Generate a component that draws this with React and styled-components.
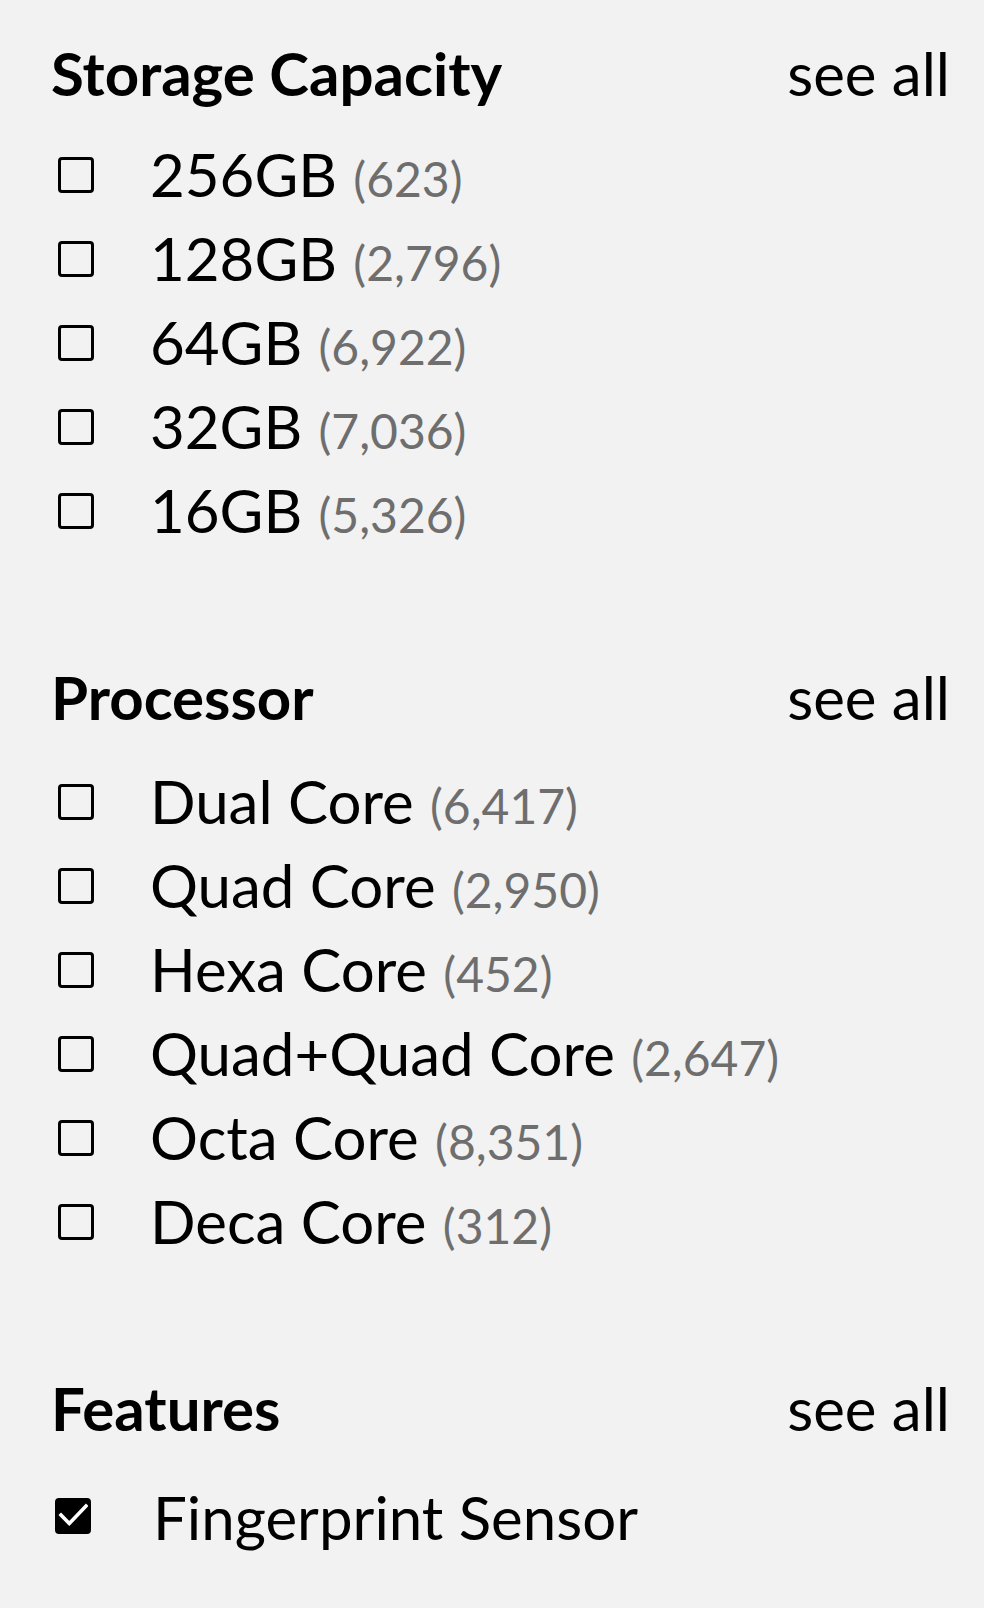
import React from 'react';
import styled, {createGlobalStyle} from 'styled-components';

const GlobalStyle = createGlobalStyle`
  body {
    margin: 0;
    background: #f2f2f2;
    font-family: Lato, "Open Sans", sans-serif;
    color: #000;
  }
`

const Page = styled.div`
  padding: 37px 34px 40px 51px;
  display: flex;
  flex-direction: column;
  gap: 109px;
`

const Section = styled.section`
  display: flex;
  flex-direction: column;
  gap: ${props => props.gap}px;
`

const Header = styled.div`
  display: flex;
  justify-content: space-between;
  align-items: baseline;
  height: 72px;
`

const Title = styled.h2`
  margin: 0;
  font-size: 60px;
  font-weight: 700;
  line-height: 72px;
`

const SeeAll = styled.a`
  font-size: 60px;
  line-height: 72px;
  color: #000;
  cursor: pointer;
`

const List = styled.ul`
  list-style: none;
  margin: 0;
  padding: 0;
`

const Row = styled.li`
  display: grid;
  grid-template-columns: 99px 1fr;
  align-items: center;
  height: 84px;
`

const Box = styled.span`
  box-sizing: border-box;
  width: ${props => props.checked ? 36 : 36}px;
  height: 36px;
  margin-left: ${props => props.checked ? 4 : 7}px;
  margin-top: -3px;
  border: 3.8px solid #000;
  border-radius: 4px;
  background: ${props => props.checked ? '#000' : 'transparent'};
  display: flex;
  align-items: center;
  justify-content: center;
  svg {
    display: block;
  }
`

const Label = styled.span`
  font-size: 60px;
  line-height: 84px;
  white-space: nowrap;
  padding-left: ${props => props.checked ? 3 : 0}px;
`

const Count = styled.span`
  font-size: 48px;
  color: #6e6e6e;
  margin-left: 4px;
`

const Checkbox = ({checked}) => (
    <Box checked={checked}>
        {checked && (
            <svg width="30" height="29" viewBox="3 3 30 29">
                <path d="M6 17 L14.3 25.5 L31 8" fill="none" stroke="#fff" strokeWidth="3.6"
                      strokeLinecap="square"/>
            </svg>
        )}
    </Box>
);

const filters = [
    {
        title: 'Storage Capacity',
        gap: 23,
        items: [
            {name: '256GB', count: '623'},
            {name: '128GB', count: '2,796'},
            {name: '64GB', count: '6,922'},
            {name: '32GB', count: '7,036'},
            {name: '16GB', count: '5,326'},
        ]
    },
    {
        title: 'Processor',
        gap: 26,
        items: [
            {name: 'Dual Core', count: '6,417'},
            {name: 'Quad Core', count: '2,950'},
            {name: 'Hexa Core', count: '452'},
            {name: 'Quad+Quad Core', count: '2,647'},
            {name: 'Octa Core', count: '8,351'},
            {name: 'Deca Core', count: '312'},
        ]
    },
    {
        title: 'Features',
        gap: 31,
        items: [
            {name: 'Fingerprint Sensor', checked: true},
        ]
    }
];

const App = () => {
    return (
        <>
            <GlobalStyle/>
            <Page>
                {filters.map(group => (
                    <Section key={group.title} gap={group.gap}>
                        <Header>
                            <Title>{group.title}</Title>
                            <SeeAll>see all</SeeAll>
                        </Header>
                        <List>
                            {group.items.map(item => (
                                <Row key={item.name}>
                                    <Checkbox checked={item.checked}/>
                                    <Label checked={item.checked}>
                                        {item.name}
                                        {item.count && <Count> ({item.count})</Count>}
                                    </Label>
                                </Row>
                            ))}
                        </List>
                    </Section>
                ))}
            </Page>
        </>
    );
};

export default App;
